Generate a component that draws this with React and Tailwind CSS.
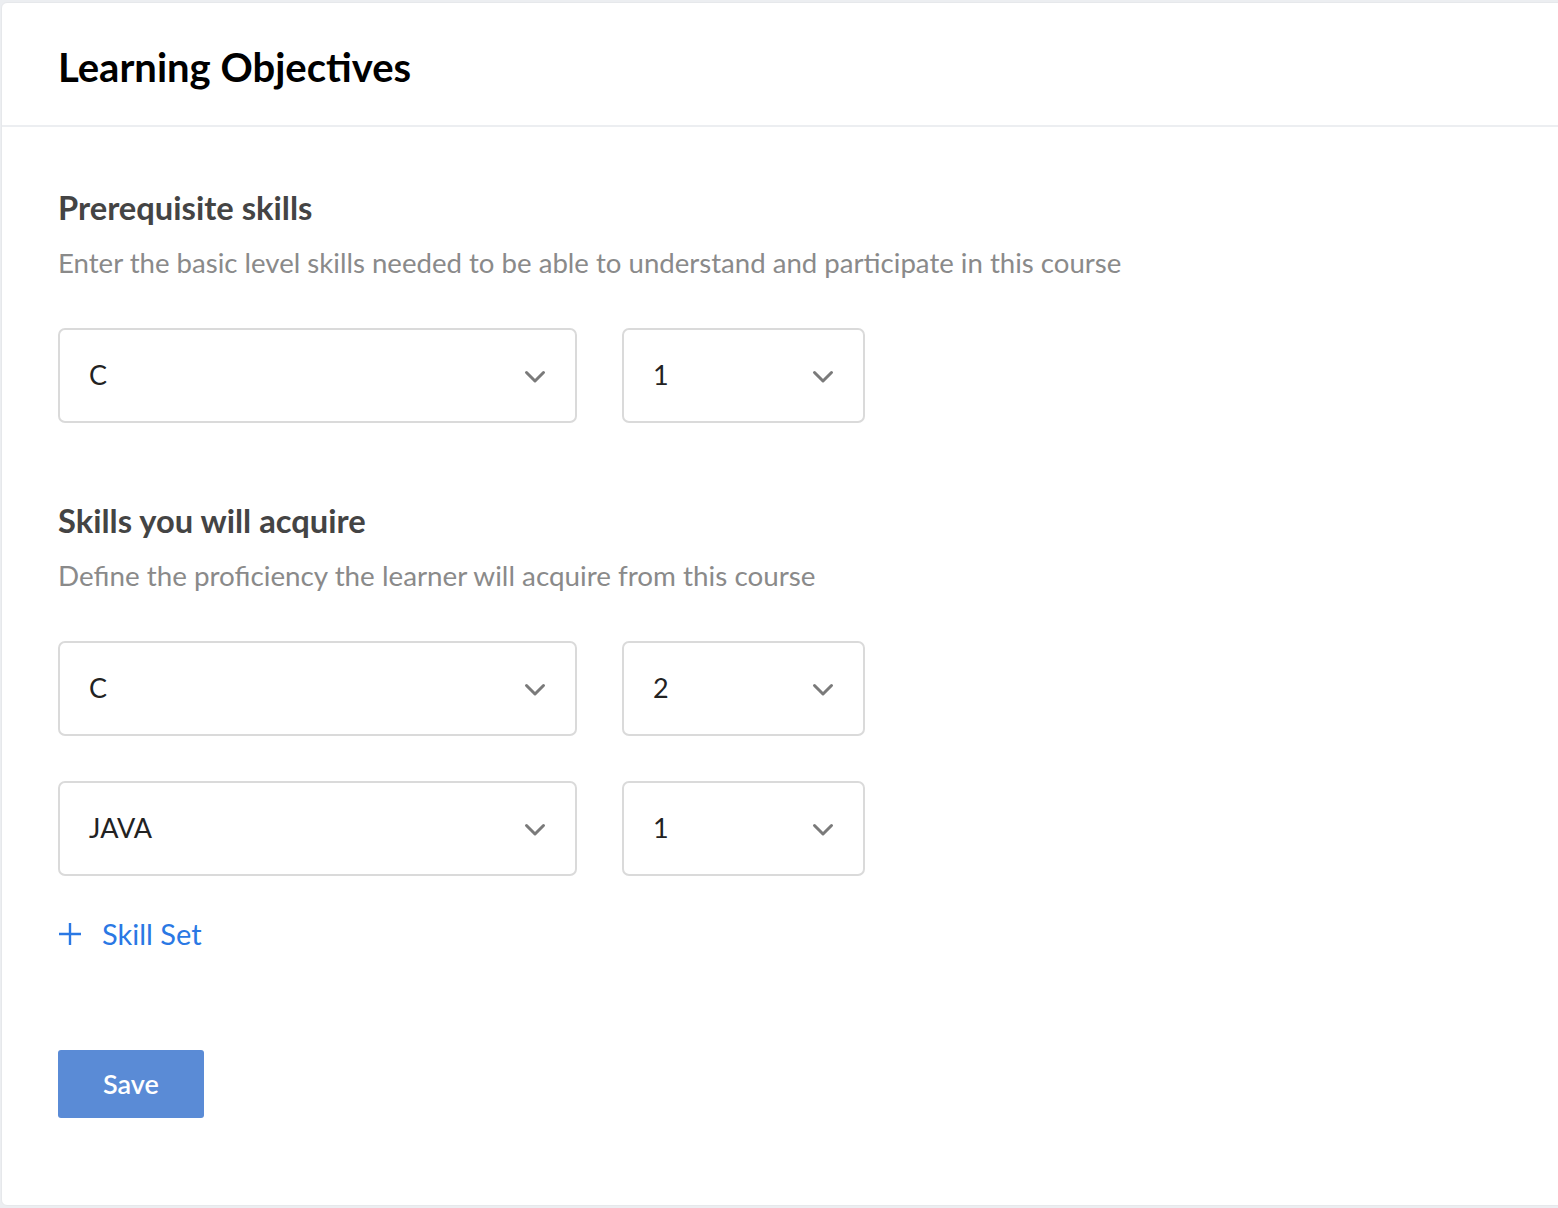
import React from 'react';

const font = { fontFamily: 'Lato, "Noto Sans", sans-serif' };

const Chevron = () => (
  <svg width="22" height="14" viewBox="0 0 22 14" fill="none" className="shrink-0 mt-[3px]">
    <path d="M2.5 2.5l8.5 8.5 8.5-8.5" stroke="#7a7a7a" strokeWidth="3" strokeLinecap="round" strokeLinejoin="round" />
  </svg>
);

const Select = ({ value, wide }) => (
  <div
    className={`${wide ? 'w-[519px]' : 'w-[243px]'} h-[95px] border-2 border-[#dadada] rounded-[7px] flex items-center justify-between pl-[29px] pr-[29px] text-[27px] text-[#222] bg-white`}
  >
    <span>{value}</span>
    <Chevron />
  </div>
);

const SkillRow = ({ skill, level }) => (
  <div className="flex gap-[45px]">
    <Select value={skill} wide />
    <Select value={level} />
  </div>
);

export default function App() {
  return (
    <div className="h-[1208px] bg-[#eceef1] pt-[2px] pl-[1px] pb-[2px] overflow-hidden" style={font}>
      <div className="h-full w-[1600px] bg-white rounded-l-[6px] border border-[#e6e8eb] flex flex-col">
        <div className="h-[124px] border-b-2 border-[#eceef1] flex items-center pl-[56px] pt-[6px]">
          <h1 className="text-[40px] font-bold text-black leading-none">Learning Objectives</h1>
        </div>
        <div className="pl-[56px] pt-[63px]">
          <h2 className="text-[32.7px] leading-[36px] font-bold text-[#444]">Prerequisite skills</h2>
          <p className="mt-[19px] text-[27.6px] leading-[36px] text-[#8a8a8a]">
            Enter the basic level skills needed to be able to understand and participate in this course
          </p>
          <div className="mt-[47px]">
            <SkillRow skill="C" level="1" />
          </div>

          <h2 className="mt-[80px] text-[32.7px] leading-[36px] font-bold text-[#444]">Skills you will acquire</h2>
          <p className="mt-[19px] text-[27.8px] leading-[36px] text-[#8a8a8a]">
            Define the proficiency the learner will acquire from this course
          </p>
          <div className="mt-[47px] flex flex-col gap-[45px]">
            <SkillRow skill="C" level="2" />
            <SkillRow skill="JAVA" level="1" />
          </div>

          <button className="mt-[40px] flex items-center gap-[20px] text-[#2a78e4] text-[29px] leading-[36px]">
            <svg width="24" height="24" viewBox="0 0 24 24" fill="none">
              <path d="M12 1v22M1 12h22" stroke="#2a78e4" strokeWidth="2.4" />
            </svg>
            <span>Skill Set</span>
          </button>

          <button className="mt-[98px] w-[146px] h-[68px] rounded-[3px] bg-[#5a8bd6] text-white text-[27px] font-semibold">
            Save
          </button>
        </div>
      </div>
    </div>
  );
}
